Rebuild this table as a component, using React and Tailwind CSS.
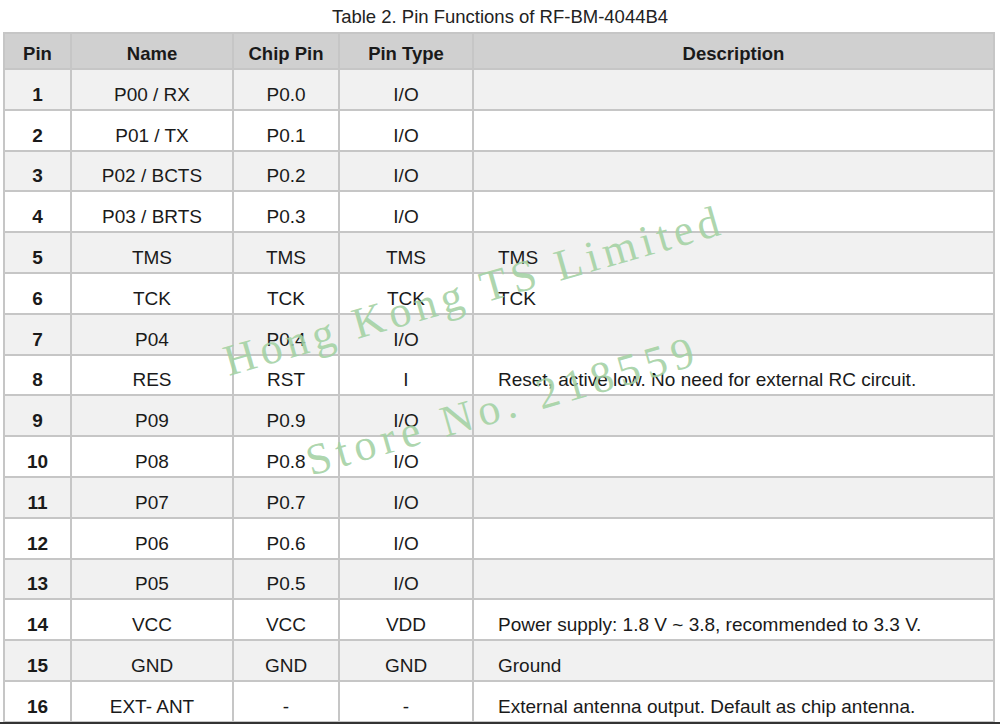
const rows = [
  ["1", "P00 / RX", "P0.0", "I/O", ""],
  ["2", "P01 / TX", "P0.1", "I/O", ""],
  ["3", "P02 / BCTS", "P0.2", "I/O", ""],
  ["4", "P03 / BRTS", "P0.3", "I/O", ""],
  ["5", "TMS", "TMS", "TMS", "TMS"],
  ["6", "TCK", "TCK", "TCK", "TCK"],
  ["7", "P04", "P0.4", "I/O", ""],
  ["8", "RES", "RST", "I", "Reset, active low. No need for external RC circuit."],
  ["9", "P09", "P0.9", "I/O", ""],
  ["10", "P08", "P0.8", "I/O", ""],
  ["11", "P07", "P0.7", "I/O", ""],
  ["12", "P06", "P0.6", "I/O", ""],
  ["13", "P05", "P0.5", "I/O", ""],
  ["14", "VCC", "VCC", "VDD", "Power supply: 1.8 V ~ 3.8, recommended to 3.3 V."],
  ["15", "GND", "GND", "GND", "Ground"],
  ["16", "EXT- ANT", "-", "-", "External antenna output. Default as chip antenna."],
];

const cell = "border-2 border-[#c6c6c6] align-bottom pb-[4px]";

export default function App() {
  return (
    <div className="relative w-[1000px] h-[724px] overflow-hidden bg-white font-['Liberation_Sans',Arial,sans-serif] text-[#1a1a1a]">
      <div className="h-[32px] pt-[6px] text-center text-[18.5px] leading-[21px] text-[#222]">
        Table 2. Pin Functions of RF-BM-4044B4
      </div>

      <table className="ml-[3px] w-[992px] table-fixed border-collapse text-[19px] leading-[21px]">
        <colgroup>
          <col className="w-[67px]" />
          <col className="w-[162px]" />
          <col className="w-[106px]" />
          <col className="w-[134px]" />
          <col />
        </colgroup>
        <thead>
          <tr className="h-[36px] bg-[#d0d0d0] text-[18.5px] font-bold">
            <th className={cell}>Pin</th>
            <th className={cell}>Name</th>
            <th className={cell}>Chip Pin</th>
            <th className={cell}>Pin Type</th>
            <th className={cell}>Description</th>
          </tr>
        </thead>
        <tbody>
          {rows.map((r, i) => (
            <tr
              key={r[0]}
              className={`h-[40.8px] ${i % 2 === 0 ? "bg-[#f1f1f1]" : "bg-white"}`}
            >
              <td className={`${cell} text-center font-bold`}>{r[0]}</td>
              <td className={`${cell} text-center`}>{r[1]}</td>
              <td className={`${cell} text-center`}>{r[2]}</td>
              <td className={`${cell} text-center`}>{r[3]}</td>
              <td className={`${cell} pl-[24px] whitespace-nowrap`}>{r[4]}</td>
            </tr>
          ))}
        </tbody>
      </table>

      <div className="absolute left-0 bottom-0 w-full h-[2px] bg-[#333]" />

      {/* watermark over the table */}
      <div className="pointer-events-none absolute left-[474px] top-[291px] -translate-x-1/2 -translate-y-1/2 -rotate-[16deg] whitespace-nowrap font-['Liberation_Serif',serif] text-[44px] leading-none tracking-[5px] text-[#a3d1a3]/90">
        Hong Kong TS Limited
      </div>
      <div className="pointer-events-none absolute left-[503px] top-[406px] -translate-x-1/2 -translate-y-1/2 -rotate-[16deg] whitespace-nowrap font-['Liberation_Serif',serif] text-[44px] leading-none tracking-[6px] text-[#a3d1a3]/90">
        Store No. 218559
      </div>
    </div>
  );
}
